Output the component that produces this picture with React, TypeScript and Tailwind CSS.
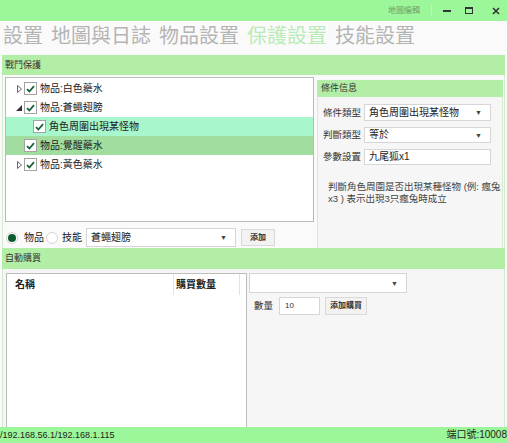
import React from "react";

const FONT = { fontFamily: '"Liberation Sans", "Noto Sans CJK TC", sans-serif' };

function Check() {
  return (
    <span className="w-[13px] h-[13px] bg-white border border-[#a3a3a3] flex items-center justify-center shrink-0">
      <svg width="9" height="8" viewBox="0 0 9 8">
        <path d="M1 4.2 L3.4 6.5 L8 1.2" fill="none" stroke="#16633a" strokeWidth="1.8" />
      </svg>
    </span>
  );
}

function Expander({ open }: { open?: boolean }) {
  return (
    <span className="w-[10px] flex items-center justify-center shrink-0">
      {open ? (
        <svg width="6" height="6" viewBox="0 0 6 6">
          <path d="M6 0 L6 6 L0 6 Z" fill="#333" />
        </svg>
      ) : (
        <svg width="5" height="8" viewBox="0 0 5 8">
          <path d="M0.5 0.5 L4.5 4 L0.5 7.5 Z" fill="none" stroke="#666" strokeWidth="1" />
        </svg>
      )}
    </span>
  );
}

function TreeRow({
  indent,
  expander,
  label,
  bg,
}: {
  indent: number;
  expander?: "open" | "closed";
  label: string;
  bg?: string;
}) {
  return (
    <div className={`h-[19px] flex items-center ${bg ?? ""}`} style={{ paddingLeft: indent }}>
      {expander ? <Expander open={expander === "open"} /> : <span className="w-[10px] shrink-0" />}
      <Check />
      <span className="ml-[3px] text-[10px] text-[#222] leading-none">{label}</span>
    </div>
  );
}

function Select({ value, className }: { value?: string; className: string }) {
  return (
    <div className={`bg-white border border-[#d6d6d6] flex items-center justify-between pl-[4px] pr-[8px] ${className}`}>
      <span className="text-[10px] text-[#222] leading-none">{value}</span>
      <span className="text-[7px] text-[#444] leading-none">▼</span>
    </div>
  );
}

function Btn({ label, className }: { label: string; className: string }) {
  return (
    <div className={`bg-[#f2f2f2] border border-[#d9d9d9] flex items-center justify-center text-[8px] font-bold text-[#333] leading-none ${className}`}>
      {label}
    </div>
  );
}

export default function App() {
  return (
    <div className="w-[507px] h-[443px] bg-[#fafafa] flex flex-col overflow-hidden" style={FONT}>
      {/* title bar */}
      <div className="h-[21px] bg-[#9cf79a] flex items-center justify-end pr-[7px] shrink-0">
        <span className="text-[8px] text-[#6f9f6d] leading-none">地圖編輯</span>
        <span className="ml-[11px] w-px h-[11px] bg-[#c6f3c3]" />
        <span className="ml-[11px] w-[8px] h-[2px] bg-[#333]" />
        <span className="ml-[14px] w-[8px] h-[7px] border border-[#333] border-t-2" />
        <svg className="ml-[19px]" width="8" height="8" viewBox="0 0 8 8">
          <path d="M1 1 L7 7 M7 1 L1 7" stroke="#333" strokeWidth="1.6" />
        </svg>
      </div>

      {/* tabs */}
      <div className="h-[34px] flex items-center gap-2 pl-[3px] pb-[4px] text-[20px] leading-none text-[#b4b4b4] shrink-0">
        <span>設置</span>
        <span>地圖與日誌</span>
        <span>物品設置</span>
        <span className="text-[#b8ebb5]">保護設置</span>
        <span>技能設置</span>
      </div>

      <div className="mx-[2px] flex-1 flex flex-col min-h-0">
        {/* 戰鬥保護 */}
        <div className="h-[20px] bg-[#b3eea6] flex items-center pl-[3px] text-[9px] text-[#333] leading-none shrink-0">戰鬥保護</div>
        <div className="h-[173px] flex border-x border-[#d3ebce] shrink-0">
          <div className="w-[311px] pl-[2px] pt-[2px] flex flex-col">
            <div className="h-[145px] bg-white border border-[#b9b9b9] pt-[1px]">
              <TreeRow indent={8} expander="closed" label="物品:白色藥水" />
              <TreeRow indent={8} expander="open" label="物品:蒼蠅翅膀" />
              <TreeRow indent={17} label="角色周圍出現某怪物" bg="bg-[#a8f6cb]" />
              <TreeRow indent={8} label="物品:覺醒藥水" bg="bg-[#a0dd9f]" />
              <TreeRow indent={8} expander="closed" label="物品:黃色藥水" />
            </div>
            <div className="mt-[6px] h-[19px] flex items-center">
              <span className="ml-[1px] w-[12px] h-[12px] rounded-full border border-[#d5d5d5] bg-white flex items-center justify-center">
                <span className="w-[8px] h-[8px] rounded-full bg-[#0d5b30]" />
              </span>
              <span className="ml-[6px] text-[10px] text-[#222] leading-none">物品</span>
              <span className="ml-[2px] w-[12px] h-[12px] rounded-full border border-[#d5d5d5] bg-white" />
              <span className="ml-[4px] text-[10px] text-[#222] leading-none">技能</span>
              <Select value="蒼蠅翅膀" className="ml-[4px] w-[150px] h-[19px]" />
              <Btn label="添加" className="ml-[5px] w-[34px] h-[17px]" />
            </div>
          </div>

          <div className="ml-[3px] mt-[5px] w-[186px] flex flex-col">
            <div className="h-[17px] bg-[#b3eea6] flex items-center pl-[4px] text-[9px] text-[#333] leading-none shrink-0">條件信息</div>
            <div className="flex-1 bg-[#f6f6f6] border-x border-[#d6ecd1] pl-[5px] pr-[11px] pt-[7px] flex flex-col gap-[6px]">
              <div className="flex items-center h-[17px]">
                <span className="w-[41px] text-[9.5px] text-[#333] leading-none">條件類型</span>
                <Select value="角色周圍出現某怪物" className="flex-1 h-[17px]" />
              </div>
              <div className="flex items-center h-[16px]">
                <span className="w-[41px] text-[9.5px] text-[#333] leading-none">判斷類型</span>
                <Select value="等於" className="flex-1 h-[16px]" />
              </div>
              <div className="flex items-center h-[16px]">
                <span className="w-[41px] text-[9.5px] text-[#333] leading-none">參數設置</span>
                <div className="flex-1 h-[16px] bg-white border border-[#d6d6d6] flex items-center pl-[4px] text-[10px] text-[#222] leading-none">九尾狐x1</div>
              </div>
              <div className="mt-[10px] pl-[5px] text-[9.5px] leading-[12px] text-[#444] whitespace-nowrap">
                <div>判斷角色周圍是否出現某種怪物 (例: 瘋兔</div>
                <div>x3 ) 表示出現3只瘋兔時成立</div>
              </div>
            </div>
          </div>
        </div>

        {/* 自動購買 */}
        <div className="h-[21px] bg-[#b3eea6] flex items-center pl-[3px] text-[9px] text-[#333] leading-none shrink-0">自動購買</div>
        <div className="flex-1 flex border-x border-[#d3ebce] bg-[#f6f6f6] min-h-0">
          <div className="ml-[3px] mt-[4px] w-[241px] bg-white border border-[#bdbdbd] border-b-0 flex flex-col">
            <div className="h-[21px] flex items-stretch text-[10px] font-bold text-[#222] leading-none">
              <div className="w-[167px] flex items-center pl-[8px] border-r border-[#e2e2e2]">名稱</div>
              <div className="w-[66px] flex items-center pl-[2px] border-r border-[#e2e2e2]">購買數量</div>
            </div>
          </div>
          <div className="ml-[2px] mt-[4px] flex flex-col">
            <Select className="w-[158px] h-[20px]" />
            <div className="mt-[4px] flex items-center h-[18px]">
              <span className="ml-[5px] text-[9.5px] text-[#333] leading-none">數量</span>
              <div className="ml-[6px] w-[41px] h-[18px] bg-white border border-[#d6d6d6] flex items-center pl-[5px] text-[8px] text-[#333] leading-none">10</div>
              <Btn label="添加購買" className="ml-[5px] w-[42px] h-[18px]" />
            </div>
          </div>
        </div>
      </div>

      {/* status bar */}
      <div className="h-[16px] bg-[#9cf79a] flex items-center justify-between leading-none text-[#222] shrink-0">
        <span className="text-[9px]">/192.168.56.1/192.168.1.115</span>
        <span className="text-[10px]">端口號:10008</span>
      </div>
    </div>
  );
}
